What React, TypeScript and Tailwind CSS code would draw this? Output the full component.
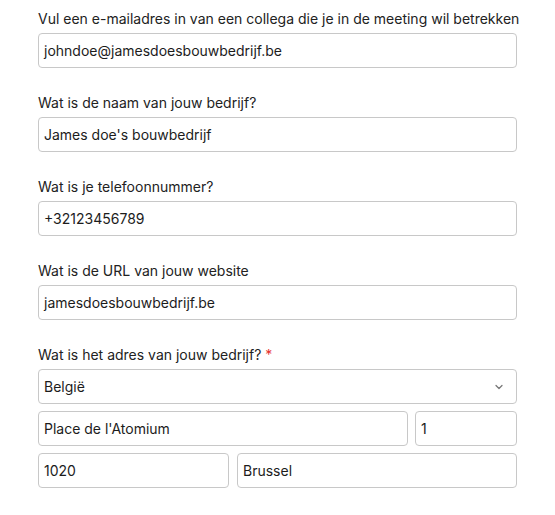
import { ChevronDown } from 'lucide-react';

const fields = [
  { label: 'Vul een e-mailadres in van een collega die je in de meeting wil betrekken', value: 'johndoe@jamesdoesbouwbedrijf.be' },
  { label: 'Wat is de naam van jouw bedrijf?', value: "James doe's bouwbedrijf" },
  { label: 'Wat is je telefoonnummer?', value: '+32123456789' },
  { label: 'Wat is de URL van jouw website', value: 'jamesdoesbouwbedrijf.be' },
];

function Box({ value, className = '' }: { value: string; className?: string }) {
  return (
    <div className={`flex h-[35px] items-center rounded-[4px] border border-[#c8c8c8] bg-white px-[5px] text-[14px] text-[#1c1c1c] ${className}`}>
      {value}
    </div>
  );
}

export default function App() {
  return (
    <div className="min-h-[515px] bg-white font-['Inter',sans-serif]">
      <div className="ml-[38px] flex w-[479px] flex-col gap-[25px] pt-[9px]">
        {fields.map((f) => (
          <div key={f.label}>
            <label className="mb-1 block whitespace-nowrap text-[14px] leading-5 text-[#222]">{f.label}</label>
            <Box value={f.value} />
          </div>
        ))}
        <div>
          <label className="mb-1 block text-[14px] leading-5 text-[#222]">
            Wat is het adres van jouw bedrijf? <span className="text-[#e5322d]">*</span>
          </label>
          <div className="flex flex-col gap-[7px]">
            <div className="flex h-[35px] items-center justify-between rounded-[4px] border border-[#c8c8c8] bg-white pl-[5px] pr-[11px] text-[14px] text-[#1c1c1c]">
              <span>België</span>
              <ChevronDown size={12} strokeWidth={2.5} className="text-[#777]" />
            </div>
            <div className="flex gap-[7px]">
              <Box value="Place de l'Atomium" className="flex-1" />
              <Box value="1" className="w-[102px]" />
            </div>
            <div className="flex gap-[8px]">
              <Box value="1020" className="w-[191px]" />
              <Box value="Brussel" className="flex-1" />
            </div>
          </div>
        </div>
      </div>
    </div>
  );
}
